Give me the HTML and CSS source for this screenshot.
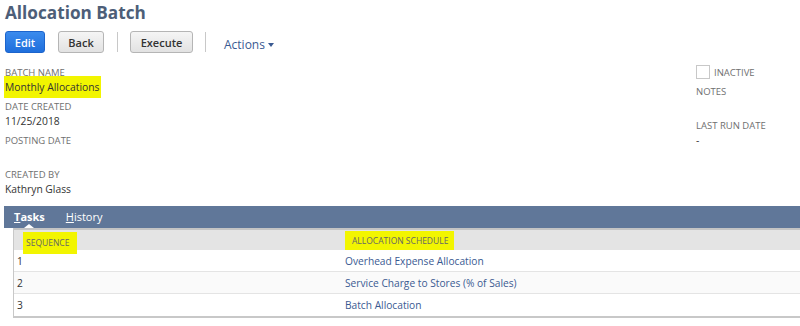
FILE: index.html
```html
<!DOCTYPE html>
<html>
<head>
<meta charset="utf-8">
<link rel="stylesheet" href="styles.css">
</head>
<body>
<div class="page">
  <h1 class="title">Allocation Batch</h1>
  <div class="toolbar">
    <button class="btn btn-primary">Edit</button>
    <button class="btn btn-back">Back</button>
    <span class="sep"></span>
    <button class="btn btn-exec">Execute</button>
    <span class="sep sep2"></span>
    <span class="actions">Actions <svg class="caret" width="6" height="4" viewBox="0 0 6 4"><path d="M0 0H6L3 4Z" fill="#3a5a92"/></svg></span>
  </div>

  <div class="fields">
    <div class="col-left">
      <div class="field">
        <div class="label">BATCH NAME</div>
        <div class="value"><span class="hl hl-name">Monthly Allocations</span></div>
      </div>
      <div class="field">
        <div class="label">DATE CREATED</div>
        <div class="value">11/25/2018</div>
      </div>
      <div class="field">
        <div class="label">POSTING DATE</div>
        <div class="value">&nbsp;</div>
      </div>
      <div class="field">
        <div class="label">CREATED BY</div>
        <div class="value">Kathryn Glass</div>
      </div>
    </div>
    <div class="col-right">
      <div class="check-row">
        <span class="checkbox"></span>
        <span class="label">INACTIVE</span>
      </div>
      <div class="label notes">NOTES</div>
      <div class="label lastrun">LAST RUN DATE</div>
      <div class="value">-</div>
    </div>
  </div>

  <div class="tabs">
    <span class="tab active"><u>T</u>asks</span>
    <span class="tab"><u>H</u>istory</span>
  </div>
  <div class="grid">
    <div class="row head">
      <div class="c1"><span class="hl hl-h1">SEQUENCE</span></div>
      <div class="c2"><span class="hl hl-h2">ALLOCATION SCHEDULE</span></div>
    </div>
    <div class="row">
      <div class="c1">1</div>
      <div class="c2 link">Overhead Expense Allocation</div>
    </div>
    <div class="row alt">
      <div class="c1">2</div>
      <div class="c2 link">Service Charge to Stores (% of Sales)</div>
    </div>
    <div class="row last">
      <div class="c1">3</div>
      <div class="c2 link">Batch Allocation</div>
    </div>
  </div>
</div>
</body>
</html>
```
FILE: styles.css
```css
html, body {
  margin: 0;
  padding: 0;
  background: #fff;
  overflow: hidden;
}
body {
  font-family: "Open Sans", "Noto Sans", sans-serif;
  color: #333;
  width: 800px;
}
.page {
  padding-left: 5px;
}
.title {
  margin: 0;
  padding-top: 1px;
  font-size: 17.2px;
  line-height: 24px;
  font-weight: 700;
  color: #4d5e78;
}
.toolbar {
  display: flex;
  align-items: center;
  height: 22px;
  margin-top: 6px;
}
.btn {
  height: 22px;
  box-sizing: border-box;
  border-radius: 3px;
  font-family: inherit;
  font-size: 11px;
  font-weight: 600;
  padding: 0;
  margin: 0;
  cursor: pointer;
}
.btn-primary {
  width: 40px;
  color: #fff;
  background: linear-gradient(#3b8bed, #1f6fdc);
  border: 1px solid #1c64cc;
}
.btn-back, .btn-exec {
  color: #333;
  background: linear-gradient(#f5f5f5, #e2e2e2);
  border: 1px solid #b5b5b5;
}
.btn-back {
  width: 46px;
  margin-left: 13px;
}
.btn-exec {
  width: 63px;
}
.sep {
  width: 1px;
  height: 20px;
  background: #c8c8c8;
  margin: 0 12px 0 13px;
}
.sep2 {
  margin: 0 18px 0 12px;
}
.actions {
  color: #3a5a92;
  font-size: 12px;
  font-weight: 400;
  display: flex;
  align-items: center;
  gap: 3px;
  margin-top: 4px;
}
.caret {
  margin-top: 1px;
}
.fields {
  display: flex;
  margin-top: 14px;
  height: 139px;
}
.col-left {
  width: 691px;
}
.field {
  margin-bottom: 7px;
}
.label {
  font-size: 9.5px;
  line-height: 12px;
  color: #707070;
  text-transform: uppercase;
}
.value {
  font-size: 10.3px;
  line-height: 14px;
  color: #333;
  margin-top: 1px;
}
.hl {
  background: #f2f500;
}
.hl-name {
  padding: 4px 2px 4px 1px;
  margin-left: -1px;
}
.col-right {
  display: flex;
  flex-direction: column;
}
.check-row {
  display: flex;
  align-items: flex-end;
  gap: 4px;
  margin-top: -2px;
}
.checkbox {
  width: 12px;
  height: 12px;
  border: 1px solid #c8c8c8;
  background: #fff;
  display: inline-block;
}
.notes {
  margin-top: 7px;
}
.lastrun {
  margin-top: 22px;
}
.tabs {
  margin-left: -1px;
  height: 22px;
  background: #607799;
  display: flex;
  align-items: center;
  padding-left: 10px;
  gap: 21px;
}
.tab {
  color: #fff;
  font-size: 11px;
  line-height: 22px;
  position: relative;
}
.tab.active {
  font-weight: 700;
}
.tab.active::after {
  content: "";
  position: absolute;
  left: 50%;
  bottom: 0;
  margin-left: -5px;
  border-left: 5px solid transparent;
  border-right: 5px solid transparent;
  border-bottom: 4px solid #fff;
}
.grid {
  margin-left: 8px;
  margin-right: -10px;
  border-left: 1px solid #c8c8c8;
  border-bottom: 2px solid #c8c8c8;
}
.row {
  display: flex;
  height: 22px;
  align-items: center;
  font-size: 10.2px;
  border-bottom: 1px solid #e4e4e4;
  box-sizing: border-box;
}
.row.last {
  border-bottom: none;
}
.row.alt {
  background: #fafafa;
}
.row.head {
  background: #e4e4e4;
  border-top: 2px solid #c4c4c4;
  border-bottom: none;
  font-size: 8.5px;
  color: #666;
}
.c1 {
  box-sizing: border-box;
  width: 327px;
  flex: none;
  padding-left: 3px;
}
.c2 {
  padding-left: 4px;
}
.head .c1 {
  padding-left: 12px;
}
.head .c2 {
  padding-left: 11px;
}
.link {
  color: #3a5a92;
}
.hl-h1 {
  padding: 5px 8px 6px 3px;
  margin-left: -3px;
  position: relative;
  top: 2px;
}
.hl-h2 {
  padding: 4px 6px 4px 7px;
  margin-left: -7px;
}
```
